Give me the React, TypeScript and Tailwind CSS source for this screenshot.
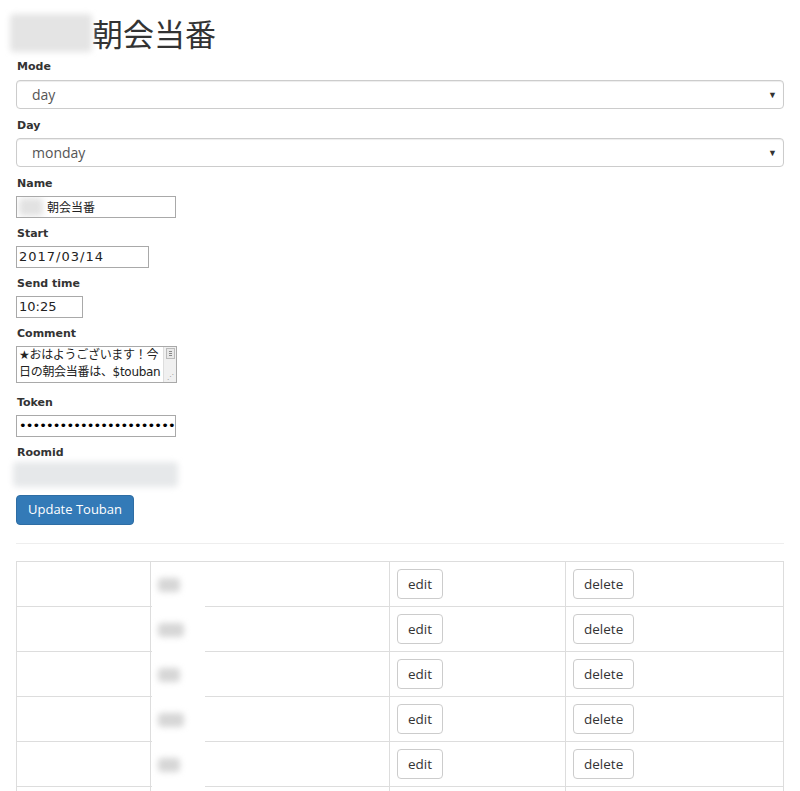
import React from 'react';

const labelCls = "block h-[18px] leading-[18px] pl-[1px] text-[11px] font-bold text-[#333] font-['DejaVu_Sans',sans-serif]";
const inputCls = "h-[22px] border border-[#a9a9a9] bg-white px-[2px] text-[13px] leading-[20px] text-[#222] font-['DejaVu_Sans','Noto_Sans_CJK_JP',sans-serif] overflow-hidden whitespace-nowrap";

const Blur: React.FC<{ className?: string }> = ({ className = '' }) => (
  <div className={`blur-[3px] rounded-sm ${className}`} />
);

const Select: React.FC<{ value: string }> = ({ value }) => (
  <div className="h-[29px] border border-[#ccc] rounded-[4px] bg-white flex items-center justify-between pl-[15px] pr-[6px] shadow-[inset_0_1px_1px_rgba(0,0,0,0.075)]">
    <span className="text-[14px] text-[#555] font-['Open_Sans',sans-serif]">{value}</span>
    <span className="text-[9px] text-[#333]">▼</span>
  </div>
);

const rows = [0, 1, 2, 3, 4, 5];

const btnCls = "h-[30px] px-[10px] border border-[#ccc] rounded-[4px] bg-white text-[#333] text-[13.5px] font-['Open_Sans',sans-serif]";

export default function App() {
  return (
    <div className="bg-white min-h-screen px-[16px] pt-[12px] font-['Open_Sans',sans-serif] text-[#333]">
      {/* Title */}
      <div className="flex items-center h-[42px] mb-[4px]">
        <Blur className="w-[82px] h-[38px] -ml-[6px] bg-[#e4e4e4]" />
        <h1 className="text-[31px] leading-[40px] text-[#333] font-['Noto_Sans_CJK_JP',sans-serif]">朝会当番</h1>
      </div>

      <div className="mb-[8px]">
        <label className={labelCls}>Mode</label>
        <div className="mt-[4px]">
          <Select value="day" />
        </div>
      </div>

      <div className="mb-[8px]">
        <label className={labelCls}>Day</label>
        <div className="mt-[3px]">
          <Select value="monday" />
        </div>
      </div>

      <div className="mb-[7px]">
        <label className={labelCls}>Name</label>
        <div className={`${inputCls} mt-[3px] w-[160px] flex items-center`}>
          <Blur className="w-[24px] h-[18px] bg-[#e2e2e2] mr-[4px]" />
          <span className="text-[12px] font-['Noto_Sans_CJK_JP',sans-serif]">朝会当番</span>
        </div>
      </div>

      <div className="mb-[7px]">
        <label className={labelCls}>Start</label>
        <div className={`${inputCls} mt-[3px] w-[133px] tracking-[1px]`}>2017/03/14</div>
      </div>

      <div className="mb-[7px]">
        <label className={labelCls}>Send time</label>
        <div className={`${inputCls} mt-[3px] w-[67px]`}>10:25</div>
      </div>

      <div className="mb-[11px]">
        <label className={labelCls}>Comment</label>
        <div className="mt-[3px] w-[161px] h-[37px] border border-[#a9a9a9] flex bg-white">
          <div className="flex-1 px-[2px] text-[12px] leading-[17px] tracking-[-0.3px] text-[#222] font-['DejaVu_Sans','Noto_Sans_CJK_JP',sans-serif] whitespace-nowrap overflow-hidden">
            <div>★おはようございます！今</div>
            <div>日の朝会当番は、$touban</div>
          </div>
          <div className="w-[13px] bg-[#f0f0f0] border-l border-[#ddd] flex flex-col items-center justify-between py-[1px]">
            <div className="w-[9px] h-[11px] border border-[#bbb] bg-[#e8e8e8] flex flex-col justify-center gap-[1px] px-[2px]">
              <div className="h-px bg-[#888]" />
              <div className="h-px bg-[#888]" />
              <div className="h-px bg-[#888]" />
            </div>
            <div className="text-[7px] leading-[8px] text-[#999]">⋰</div>
          </div>
        </div>
      </div>

      <div className="mb-[7px]">
        <label className={labelCls}>Token</label>
        <div className={`${inputCls} mt-[3px] w-[160px] text-[12px] tracking-[-0.9px] text-black`}>
          ••••••••••••••••••••••••••••
        </div>
      </div>

      <div className="mb-[8px]">
        <label className={labelCls}>Roomid</label>
        <Blur className="-ml-[3px] w-[165px] h-[25px] bg-[#e6e8ea]" />
      </div>

      <button className="h-[30px] px-[11px] rounded-[4px] bg-[#337ab7] border border-[#2e6da4] text-white text-[13px] font-['Open_Sans',sans-serif]">
        Update Touban
      </button>

      <hr className="mt-[18px] mb-[17px] border-t border-[#eee]" />

      {/* Table */}
      <div className="relative">
        <table className="w-full border-collapse border border-[#ddd] text-[14px]">
          <tbody>
            {rows.map(r => (
              <tr key={r} className="h-[45px]">
                <td className="w-[134px] border border-[#ddd]" />
                <td className="w-[239px] border border-[#ddd]" />
                <td className="w-[176px] border border-[#ddd] px-[7px]">
                  <button className={btnCls}>edit</button>
                </td>
                <td className="border border-[#ddd] px-[7px]">
                  <button className={btnCls}>delete</button>
                </td>
              </tr>
            ))}
          </tbody>
        </table>
        {/* blurred name column overlay */}
        <div className="absolute left-[136px] top-[1px] w-[53px] bottom-0 bg-white flex flex-col">
          {rows.map(r => (
            <div key={r} className="h-[45px] flex items-center pl-[6px]">
              <Blur className={`h-[14px] bg-[#d6d6d6] ${r % 2 === 0 ? 'w-[22px]' : 'w-[26px]'}`} />
            </div>
          ))}
        </div>
      </div>
    </div>
  );
}
